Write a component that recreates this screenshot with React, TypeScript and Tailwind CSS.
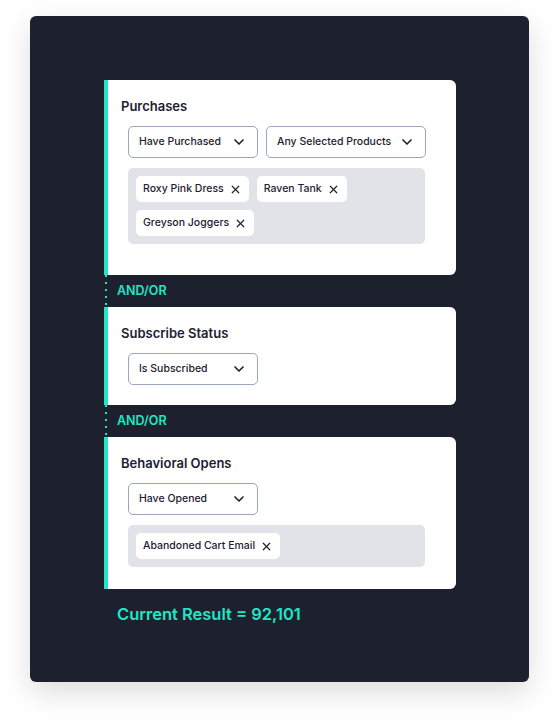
import { ChevronDown, X } from "lucide-react";

interface Segment {
  title: string;
  selects: { label: string; width: string }[];
  tags: string[];
  pb: string;
}

const segments: Segment[] = [
  {
    title: "Purchases",
    selects: [
      { label: "Have Purchased", width: "w-[130px]" },
      { label: "Any Selected Products", width: "w-[160px]" },
    ],
    tags: ["Roxy Pink Dress", "Raven Tank", "Greyson Joggers"],
    pb: "pb-[31px]",
  },
  {
    title: "Subscribe Status",
    selects: [{ label: "Is Subscribed", width: "w-[130px]" }],
    tags: [],
    pb: "pb-[20px]",
  },
  {
    title: "Behavioral Opens",
    selects: [{ label: "Have Opened", width: "w-[130px]" }],
    tags: ["Abandoned Cart Email"],
    pb: "pb-[22px]",
  },
];

const Select = ({ label, width }: { label: string; width: string }) => (
  <div
    className={`${width} h-[32px] flex items-center justify-between pl-[10px] pr-[10px] border border-[#9ba5bc] rounded-[5px] text-[10.5px] font-medium text-[#1d2130]`}
  >
    <span>{label}</span>
    <ChevronDown className="w-[16px] h-[16px]" strokeWidth={2.5} />
  </div>
);

const Tag = ({ name }: { name: string }) => (
  <div className="h-[26px] flex items-center gap-[5px] pl-[7px] pr-[7px] bg-white rounded-[5px] text-[10.5px] font-medium text-[#1d2130]">
    <span>{name}</span>
    <X className="w-[13px] h-[13px]" strokeWidth={2.2} />
  </div>
);

const AndOr = () => (
  <div className="h-[32px] flex items-center">
    <div className="ml-[1px] w-[2px] h-full bg-[repeating-linear-gradient(to_bottom,#20e6c8_0_2px,transparent_2px_7px)]" />
    <span className="ml-[10px] text-[12.5px] font-semibold text-[#20e6c8]">
      AND/OR
    </span>
  </div>
);

const SegmentCard = ({ seg }: { seg: Segment }) => (
  <div
    className={`w-[352px] bg-white border-l-4 border-[#20e6c8] rounded-r-[6px] pl-[13px] pt-4 ${seg.pb}`}
  >
    <h2 className="text-[13px] leading-5 font-semibold text-[#1d2130]">
      {seg.title}
    </h2>
    <div className="ml-[7px] mt-[10px] flex gap-2">
      {seg.selects.map((s) => (
        <Select key={s.label} label={s.label} width={s.width} />
      ))}
    </div>
    {seg.tags.length > 0 && (
      <div className="ml-[7px] mt-[10px] w-[297px] p-2 flex flex-wrap gap-2 bg-[#e2e3e8] rounded-[5px]">
        {seg.tags.map((t) => (
          <Tag key={t} name={t} />
        ))}
      </div>
    )}
  </div>
);

export default function App() {
  return (
    <div
      className="w-[559px] h-[726px] bg-white pt-4 pl-[30px]"
      style={{ fontFamily: "Inter, 'Noto Sans', sans-serif" }}
    >
      <div className="w-[499px] h-[666px] bg-[#1c212d] rounded-[6px] shadow-[0_10px_30px_rgba(0,0,0,0.14)] pt-16 pl-[74px]">
        {segments.map((seg, i) => (
          <div key={seg.title}>
            {i > 0 && <AndOr />}
            <SegmentCard seg={seg} />
          </div>
        ))}
        <div className="ml-[13px] mt-[13px] text-[16.5px] leading-6 font-semibold text-[#20e6c8]">
          Current Result = 92,101
        </div>
      </div>
    </div>
  );
}
